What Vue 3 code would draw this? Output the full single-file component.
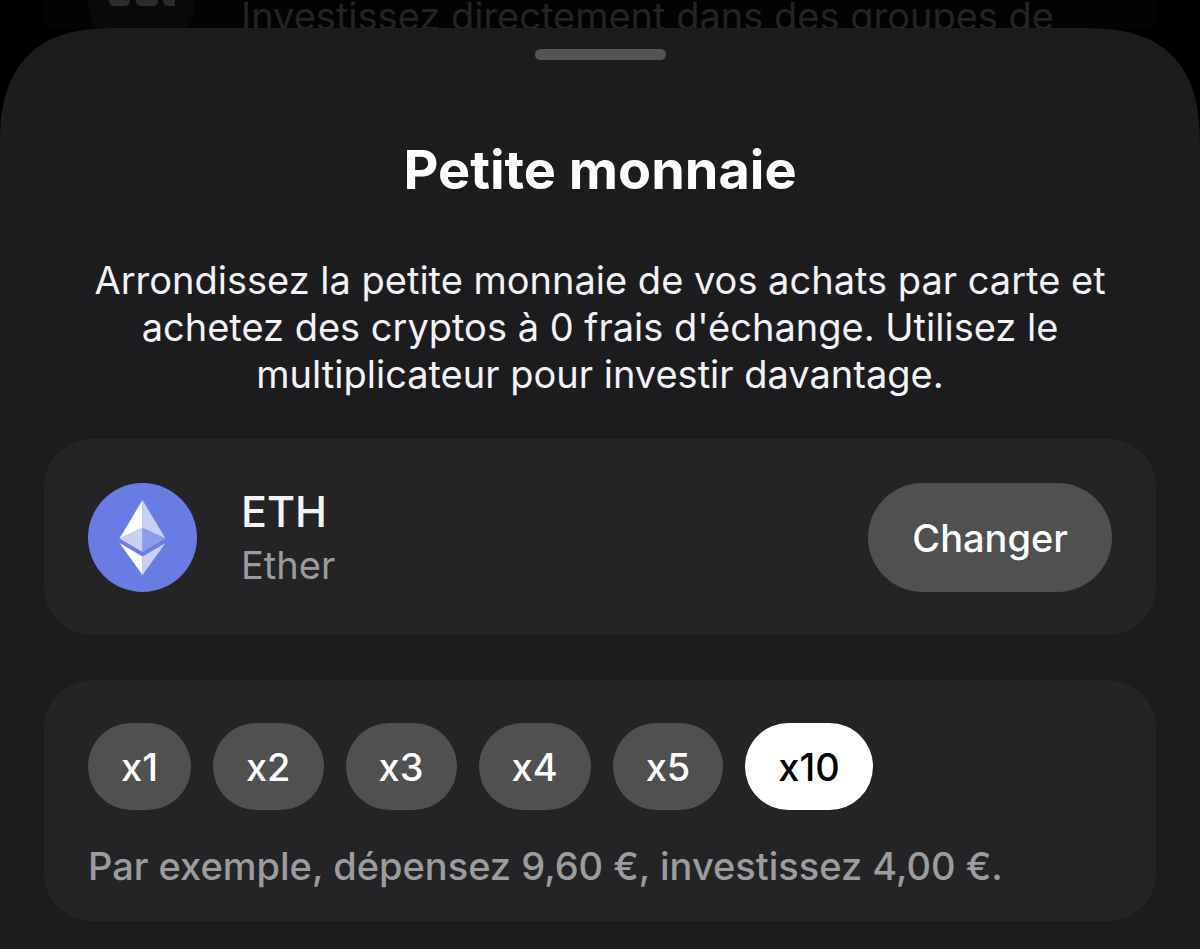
<script setup>
import { ref } from 'vue'

const multipliers = [1, 2, 3, 4, 5, 10]
const selected = ref(10)
</script>

<template>
  <div class="screen">
    <div class="behind" aria-hidden="true">
      <div class="behind-icon">
        <svg width="66" height="40" viewBox="0 0 66 40">
          <rect x="0" y="0" width="21" height="40" rx="5" />
          <rect x="27" y="0" width="22" height="40" rx="5" />
          <path d="M54 0H66V40H59a5 5 0 0 1-5-5Z" />
        </svg>
      </div>
      <p class="behind-text">Investissez directement dans des groupes de</p>
    </div>

    <main class="sheet">
      <div class="handle"></div>
      <h1>Petite monnaie</h1>
      <p class="intro">
        Arrondissez la petite monnaie de vos achats par carte et achetez des cryptos à 0 frais
        d'échange. Utilisez le multiplicateur pour investir davantage.
      </p>

      <section class="card asset">
        <svg class="coin" viewBox="0 0 109 109" role="img" aria-label="Ethereum">
          <circle cx="54.5" cy="54.5" r="54.5" fill="#687de3" />
          <path d="M54.5 17 31.5 55.5 54.5 45Z" fill="#fff" />
          <path d="M54.5 17V45L77.5 55.5Z" fill="#c8d0f6" />
          <path d="M31.5 55.5 54.5 45V69Z" fill="#c8d0f6" />
          <path d="M54.5 45 77.5 55.5 54.5 69Z" fill="#8c9ceb" />
          <path d="M31.5 60 54.5 73.5V92Z" fill="#fff" />
          <path d="M54.5 73.5 77.5 60 54.5 92Z" fill="#c8d0f6" />
        </svg>
        <div class="names">
          <h2>ETH</h2>
          <p>Ether</p>
        </div>
        <button type="button" class="change">Changer</button>
      </section>

      <section class="card boost">
        <div class="chips" role="group" aria-label="Multiplicateur">
          <button
            v-for="m in multipliers"
            :key="m"
            type="button"
            class="chip"
            :class="{ active: m === selected }"
            :aria-pressed="m === selected"
            @click="selected = m"
          >x{{ m }}</button>
        </div>
        <p class="example">Par exemple, dépensez 9,60 €, investissez 4,00 €.</p>
      </section>
    </main>
  </div>
</template>

<style>
body {
  margin: 0;
  background: #000;
}
</style>

<style scoped>
.screen {
  display: flex;
  flex-direction: column;
  min-height: 100vh;
  overflow: hidden;
  background: #000;
  font-family: Inter, "Liberation Sans", sans-serif;
}
h1, h2, p {
  margin: 0;
}
button {
  border: 0;
  background: #505050;
  color: #fff;
  font: inherit;
  font-size: 38px;
  font-weight: 500;
  cursor: pointer;
}
.behind {
  display: flex;
  align-items: flex-end;
  gap: 46px;
  height: 28px;
  margin: 0 44px;
  padding: 0 44px;
  background: #030303;
}
.behind-icon {
  flex: none;
  display: flex;
  align-items: flex-end;
  justify-content: center;
  width: 107px;
  height: 107px;
  margin-bottom: -26px;
  border-radius: 50%;
  background: #090909;
}
.behind-icon svg {
  margin-bottom: 48px;
  fill: #2c2c2c;
}
.behind-text {
  margin-bottom: -12px;
  color: #242425;
  font-size: 38px;
  line-height: 47px;
  white-space: nowrap;
}
.sheet {
  position: relative;
  flex: 1;
  display: flex;
  flex-direction: column;
  padding: 21px 44px 28px;
  border-radius: 104px 104px 0 0;
  background: #1c1c1e;
}
@supports (corner-shape: superellipse(1.4)) {
  .sheet {
    border-radius: 120px 120px 0 0;
    corner-shape: superellipse(1.4);
  }
}
.handle {
  align-self: center;
  width: 131px;
  height: 11px;
  border-radius: 6px;
  background: #545456;
}
h1 {
  margin-top: 77px;
  color: #fff;
  font-size: 54px;
  font-weight: 700;
  line-height: 66px;
  text-align: center;
}
.intro {
  margin: 54px 44px 41px;
  color: #f2f2f7;
  font-size: 38px;
  line-height: 47px;
  text-align: center;
}
.card {
  padding: 44px 44px 43px;
  border-radius: 48px;
  background: #242426;
}
.card + .card {
  margin-top: 45px;
}
.asset {
  display: flex;
  align-items: center;
  gap: 44px;
}
.coin {
  flex: none;
  width: 109px;
  height: 109px;
}
.names {
  flex: 1;
}
h2 {
  color: #f2f2f7;
  font-size: 43px;
  font-weight: 500;
  line-height: 54px;
}
.names p {
  color: #9c9c9e;
  font-size: 38px;
  line-height: 54px;
}
.change {
  height: 109px;
  padding: 0 44px;
  border-radius: 55px;
}
.boost {
  padding-top: 43px;
  padding-bottom: 31px;
}
.chips {
  display: flex;
  flex-wrap: wrap;
  gap: 22px;
}
.chip {
  height: 87px;
  padding: 0 33px;
  border-radius: 44px;
}
.chip.active {
  background: #fff;
  color: #000;
}
.example {
  margin-top: 33px;
  color: #9c9c9e;
  font-size: 38px;
  font-weight: 500;
  line-height: 47px;
}
</style>
